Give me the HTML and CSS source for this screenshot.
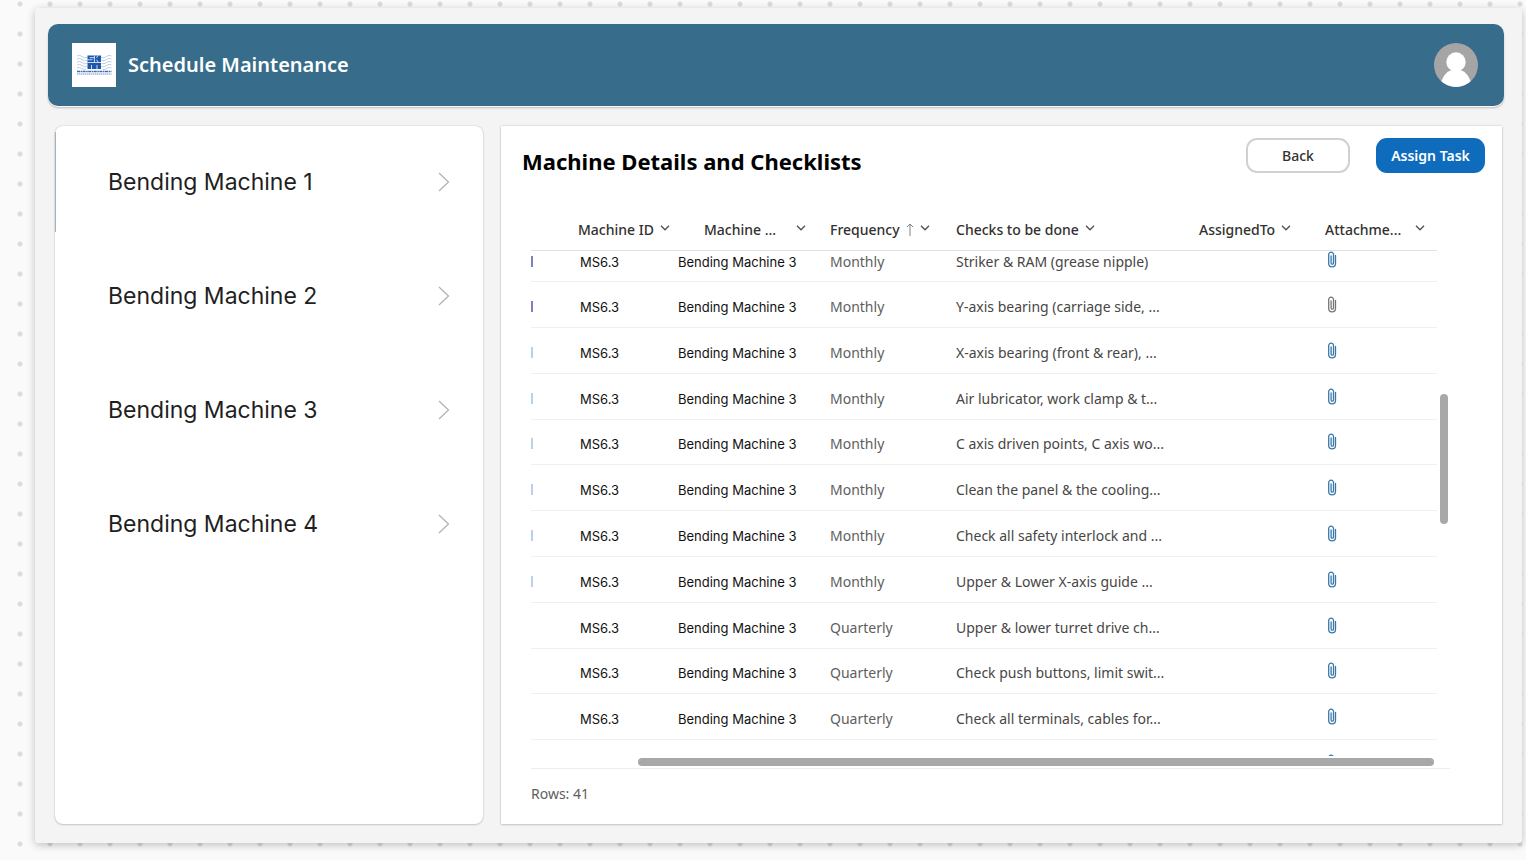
FILE: index.html
```
<!DOCTYPE html>
<html lang="en">
<head>
<meta charset="utf-8">
<meta name="viewport" content="width=device-width, initial-scale=1">
<title>Schedule Maintenance</title>
<link rel="stylesheet" href="styles.css">
</head>
<body>
<svg class="defs" aria-hidden="true">
  <symbol id="clip" viewBox="0 0 10 17">
    <path d="M8.500 4.500V12.500a3.400 3.400 0 0 1-6.800 0V3.600a2.400 2.400 0 0 1 4.800 0V12a1.200 1.200 0 0 1-2.400 0V5" fill="none" stroke="currentColor" stroke-width="1.300" stroke-linecap="round"/>
  </symbol>
  <symbol id="down" viewBox="0 0 10 6">
    <path d="M1 .8l4 4 4-4" fill="none" stroke="currentColor" stroke-width="1.300"/>
  </symbol>
  <symbol id="next" viewBox="0 0 12 20">
    <path d="M1 1l9.500 9L1 19" fill="none" stroke="currentColor" stroke-width="1.200"/>
  </symbol>
</svg>
<div class="app">
  <header class="topbar">
    <svg class="logo" viewBox="0 0 44 44" role="img" aria-label="SKM">
      <rect width="44" height="44" fill="#fff"/>
      <g fill="none" stroke="#a9bfdf" stroke-width=".8">
        <path d="M5 13q2.500-1.500 5 .5t5 1M5 16q2.500-1.500 5 .5t5 1M5 19q2.500-1.500 5 .5t5 1M5 22q2.500-1.500 5 .5t5 1M5 25q2.500-1.500 5 .5t4 .5"/>
        <path d="M39.500 13q-2.500-1.500-5 .5t-5 1M39.500 16q-2.500-1.500-5 .5t-5 1M39.500 19q-2.500-1.500-5 .5t-5 1M39.500 22q-2.500-1.500-5 .5t-5 1M39.500 25q-2.500-1.500-5 .5t-4 .5"/>
      </g>
      <path d="M15.500 12.500h13.500v13.500h-13.500z" fill="#1c56ad"/>
      <path d="M17.500 14.700h5M15.500 16.800h5M22.400 12.500v6.500M26 12.500l-1.500 2.300M26 19l-1.500-2.300M15.500 19.500h13.500M19.500 22v4M25 22v4" stroke="#dfe9f6" stroke-width=".9" fill="none"/>
      <path d="M5 28.500h34.500" stroke="#3a6bb3" stroke-width="1.300" stroke-dasharray="3 .6 1.500 .5"/>
      <path d="M5 31h34.500" stroke="#6f95cb" stroke-width="1.200" stroke-dasharray="1.500 .5"/>
    </svg>
    <h1 class="topbar-title">Schedule Maintenance</h1>
    <svg class="avatar" viewBox="0 0 44 44" role="img" aria-label="User profile">
      <clipPath id="round"><circle cx="22" cy="22" r="22"/></clipPath>
      <g clip-path="url(#round)">
        <rect width="44" height="44" fill="#a5a5a5"/>
        <circle cx="22" cy="19" r="9.700" fill="#fff"/>
        <path d="M6 42C9 32 14 27 19 27h6c5 0 10 5 13 15v4H6z" fill="#fff"/>
      </g>
    </svg>
  </header>
  <main class="content">
    <nav class="machines" aria-label="Machines">
      <a class="machine is-selected" href="#m1">Bending Machine 1<svg class="next"><use href="#next"/></svg></a>
      <a class="machine" href="#m2">Bending Machine 2<svg class="next"><use href="#next"/></svg></a>
      <a class="machine" href="#m3">Bending Machine 3<svg class="next"><use href="#next"/></svg></a>
      <a class="machine" href="#m4">Bending Machine 4<svg class="next"><use href="#next"/></svg></a>
    </nav>
    <section class="details">
      <div class="details-head">
        <h2 class="details-title">Machine Details and Checklists</h2>
        <button class="btn" type="button">Back</button>
        <button class="btn btn-primary" type="button">Assign Task</button>
      </div>
      <div class="grid">
        <div class="grid-main">
          <table class="checks">
            <colgroup><col class="c-mark"><col class="c-id"><col class="c-name"><col class="c-freq"><col class="c-check"><col class="c-to"><col class="c-att"></colgroup>
            <thead>
              <tr>
                <th></th>
                <th class="th-id"><span class="th">Machine ID<svg class="down"><use href="#down"/></svg></span></th>
                <th class="th-name"><span class="th th-spread">Machine ...<svg class="down"><use href="#down"/></svg></span></th>
                <th><span class="th">Frequency<svg class="sort" viewBox="0 0 8 13"><path d="M4 13V1M1 4l3-3 3 3" fill="none" stroke="currentColor"/></svg><svg class="down"><use href="#down"/></svg></span></th>
                <th><span class="th">Checks to be done<svg class="down"><use href="#down"/></svg></span></th>
                <th><span class="th">AssignedTo<svg class="down"><use href="#down"/></svg></span></th>
                <th><span class="th th-spread">Attachme...<svg class="down"><use href="#down"/></svg></span></th>
              </tr>
            </thead>
            <tbody>
              <tr class="row-cut"><td><i class="mark mark-dark"></i></td><td class="own own-id">MS6.3</td><td class="own">Bending Machine 3</td><td>Monthly</td><td class="text">Striker &amp; RAM (grease nipple)</td><td></td><td><svg class="clip"><use href="#clip"/></svg></td></tr>
              <tr><td><i class="mark mark-dark"></i></td><td class="own own-id">MS6.3</td><td class="own">Bending Machine 3</td><td>Monthly</td><td class="text">Y-axis bearing (carriage side, ...</td><td></td><td><svg class="clip clip-grey"><use href="#clip"/></svg></td></tr>
              <tr><td><i class="mark"></i></td><td class="own own-id">MS6.3</td><td class="own">Bending Machine 3</td><td>Monthly</td><td class="text">X-axis bearing (front &amp; rear), ...</td><td></td><td><svg class="clip"><use href="#clip"/></svg></td></tr>
              <tr><td><i class="mark"></i></td><td class="own own-id">MS6.3</td><td class="own">Bending Machine 3</td><td>Monthly</td><td class="text">Air lubricator, work clamp &amp; t...</td><td></td><td><svg class="clip"><use href="#clip"/></svg></td></tr>
              <tr><td><i class="mark"></i></td><td class="own own-id">MS6.3</td><td class="own">Bending Machine 3</td><td>Monthly</td><td class="text">C axis driven points, C axis wo...</td><td></td><td><svg class="clip"><use href="#clip"/></svg></td></tr>
              <tr><td><i class="mark"></i></td><td class="own own-id">MS6.3</td><td class="own">Bending Machine 3</td><td>Monthly</td><td class="text">Clean the panel &amp; the cooling...</td><td></td><td><svg class="clip"><use href="#clip"/></svg></td></tr>
              <tr><td><i class="mark"></i></td><td class="own own-id">MS6.3</td><td class="own">Bending Machine 3</td><td>Monthly</td><td class="text">Check all safety interlock and ...</td><td></td><td><svg class="clip"><use href="#clip"/></svg></td></tr>
              <tr><td><i class="mark"></i></td><td class="own own-id">MS6.3</td><td class="own">Bending Machine 3</td><td>Monthly</td><td class="text">Upper &amp; Lower X-axis guide ...</td><td></td><td><svg class="clip"><use href="#clip"/></svg></td></tr>
              <tr><td></td><td class="own own-id">MS6.3</td><td class="own">Bending Machine 3</td><td>Quarterly</td><td class="text">Upper &amp; lower turret drive ch...</td><td></td><td><svg class="clip"><use href="#clip"/></svg></td></tr>
              <tr><td></td><td class="own own-id">MS6.3</td><td class="own">Bending Machine 3</td><td>Quarterly</td><td class="text">Check push buttons, limit swit...</td><td></td><td><svg class="clip"><use href="#clip"/></svg></td></tr>
              <tr><td></td><td class="own own-id">MS6.3</td><td class="own">Bending Machine 3</td><td>Quarterly</td><td class="text">Check all terminals, cables for...</td><td></td><td><svg class="clip"><use href="#clip"/></svg></td></tr>
              <tr class="row-peek"><td></td><td></td><td></td><td></td><td></td><td></td><td><div class="peek"><svg class="clip"><use href="#clip"/></svg></div></td></tr>
            </tbody>
          </table>
          <div class="hbar"><div class="hthumb"></div></div>
        </div>
        <div class="vbar"><div class="vthumb"></div></div>
      </div>
      <p class="rows">Rows: 41</p>
    </section>
  </main>
</div>
</body>
</html>
```
FILE: styles.css
```
* {
  box-sizing: border-box;
}

body {
  margin: 0;
  min-height: 100vh;
  padding: 8px 4px 17px 35px;
  display: flex;
  border-right: 2px solid #fff;
  font-family: "Noto Sans", "Open Sans", sans-serif;
  font-size: 14px;
  line-height: 20px;
  color: #323130;
  background: #fafafa radial-gradient(circle at 15px 15px, #dcdcdc 2px, transparent 3px) 5px -11px / 30px 30px;
}

.defs {
  position: absolute;
  width: 0;
  height: 0;
}

.app {
  flex: 1;
  min-width: 0;
  display: flex;
  flex-direction: column;
  gap: 20px;
  padding: 16px 18px 19px 13px;
  background: #f4f4f4;
  border-radius: 3px;
  box-shadow: 0 2px 8px rgba(0, 0, 0, 0.24);
}

/* Header */

.topbar {
  display: flex;
  align-items: center;
  gap: 12px;
  height: 82px;
  padding: 0 26px 0 24px;
  border-radius: 10px;
  background: #376c8a;
  box-shadow: 0 1px 1px #fff, 0 2px 2px rgba(0, 0, 0, 0.25);
}

.logo,
.avatar {
  flex: none;
  width: 44px;
  height: 44px;
}

.topbar-title {
  flex: 1;
  margin: 0;
  font-size: 20px;
  line-height: 28px;
  font-weight: 600;
  color: #fff;
}

.content {
  flex: 1;
  display: flex;
  gap: 18px;
  padding: 0 2px 0 7px;
}

/* Machine list */

.machines,
.details {
  background: #fff;
  box-shadow: 0 0 2px rgba(0, 0, 0, 0.2), 0 1px 2px rgba(0, 0, 0, 0.14);
}

.machines {
  flex: 0 0 428px;
  border-radius: 8px;
}

.machine {
  position: relative;
  display: flex;
  align-items: center;
  justify-content: space-between;
  min-height: 114px;
  padding: 0 33px 2px 53px;
  font-family: Inter, "Open Sans", sans-serif;
  font-size: 23px;
  line-height: 32px;
  color: #1f1f1f;
  text-decoration: none;
}

.is-selected::before {
  content: "";
  position: absolute;
  left: 0;
  top: 6px;
  bottom: 8px;
  width: 1px;
  background: #9fb4c0;
}

.next {
  width: 12px;
  height: 20px;
  color: #b0b0b0;
}

/* Details panel */

.details {
  flex: 1;
  min-width: 0;
  padding: 12px 17px 0 21px;
}

.details-head {
  display: flex;
  align-items: flex-start;
  gap: 26px;
}

.details-title {
  flex: 1;
  margin: 8px 0 0;
  font-size: 22px;
  line-height: 30px;
  font-weight: 700;
  color: #000;
}

.btn {
  height: 35px;
  width: 104px;
  padding: 0;
  border: 2px solid #d1d1d1;
  border-radius: 11px;
  background: #fff;
  font: 500 14px/20px "Noto Sans", sans-serif;
  color: #323130;
}

.btn-primary {
  width: 109px;
  border-color: #0f6cbd;
  background: #0f6cbd;
  font-weight: 600;
  color: #fff;
}

.grid {
  display: flex;
  margin: 34px 35px 0 9px;
  border-bottom: 1px solid #ededed;
}

.grid-main {
  flex: 1;
  min-width: 0;
}

.checks {
  width: 100%;
  table-layout: fixed;
  border-collapse: collapse;
}

.c-mark { width: 35px; }
.c-id { width: 100px; }
.c-name { width: 152px; }
.c-freq { width: 126px; }
.c-to { width: 126px; }
.c-att { width: 124px; }

th {
  height: 40px;
  padding: 0 12px;
  text-align: left;
  vertical-align: middle;
  font-weight: 500;
  white-space: nowrap;
  border-bottom: 1px solid #e1e1e1;
}

.th-id {
  padding-right: 0;
}

.th-name {
  padding-left: 38px;
}

.th {
  display: flex;
  align-items: center;
  gap: 6px;
}

.th-spread {
  justify-content: space-between;
}

.down {
  flex: none;
  width: 10px;
  height: 6px;
  margin-bottom: 4px;
  color: #505050;
}

.sort {
  flex: none;
  width: 8px;
  height: 13px;
  color: #808080;
}

td {
  height: 46px;
  padding: 0 12px 10px;
  vertical-align: bottom;
  white-space: nowrap;
  color: #605e5c;
  border-bottom: 1px solid #efefef;
}

tr:nth-child(5n) td {
  height: 45px;
}

td:first-child {
  padding-left: 0;
}

.row-cut td {
  height: 30px;
  padding-bottom: 9px;
}

td.text {
  color: #484644;
}

td.own {
  font-family: Inter, "Open Sans", sans-serif;
  font-size: 13px;
  color: #111;
}

td.own-id {
  padding-left: 14px;
}

.mark {
  display: block;
  width: 2px;
  height: 11px;
  margin-bottom: 5px;
  background: #b5d3ee;
}

.mark-dark {
  background: #7c80c0;
}

.clip {
  display: block;
  width: 10px;
  height: 17px;
  margin-bottom: 4px;
  margin-left: 2px;
  color: #3a78a8;
}

.clip-grey {
  color: #767676;
}

.row-peek td {
  height: 19px;
  padding-bottom: 2px;
  border: 0;
}

.peek {
  height: 2px;
  overflow: hidden;
}

.hbar {
  height: 10px;
  padding: 0 3px 2px 107px;
}

.hthumb {
  height: 8px;
  border-radius: 4px;
  background: #a8a8a8;
}

.vbar {
  flex: none;
  width: 13px;
  display: flex;
  flex-direction: column;
  align-items: flex-start;
  padding: 184px 0 0 3px;
}

.vthumb {
  width: 8px;
  height: 130px;
  border-radius: 4px;
  background: #a8a8a8;
}

.rows {
  margin: 15px 9px;
  color: #605e5c;
}
```
